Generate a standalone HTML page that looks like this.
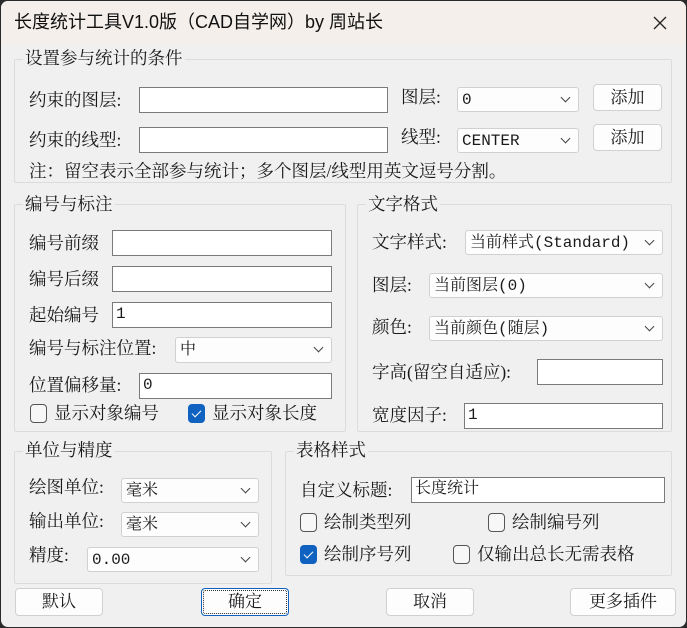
<!DOCTYPE html>
<html><head><meta charset="utf-8"><style>
*{box-sizing:border-box;margin:0;padding:0}
body{width:687px;height:628px;background:#2a2a2a;position:relative;overflow:hidden;font-family:"Liberation Serif","Noto Serif CJK SC",serif;font-size:17.5px;color:#1a1a1a}
#win{position:absolute;left:1px;top:1px;width:685px;height:626px;background:#f0f0f0;border-radius:7px;overflow:hidden}
#tb{position:absolute;left:0;top:0;width:685px;height:44px;background:#f4efeb;font-family:"Liberation Sans","Noto Sans CJK SC",sans-serif;font-size:18px;color:#111}
.a{position:absolute;white-space:nowrap;line-height:20px}
.g{position:absolute;border:1px solid #dcdcdc;border-radius:2px}
.lg{position:absolute;background:#f0f0f0;padding:0 2px;line-height:20px;white-space:nowrap}
.in{position:absolute;background:#fff;border:1px solid #7a7a7a;padding-left:3px;line-height:23px;font-size:16px;font-family:"Liberation Mono","Noto Serif CJK SC",serif}
.sel{position:absolute;background:#fdfdfd;border:1px solid #d0d0d0;border-radius:3px;padding-left:4px;font-size:16px;line-height:24px;white-space:nowrap;font-family:"Liberation Mono","Noto Serif CJK SC",serif}
.sel:after{content:"";position:absolute;right:9px;top:6px;width:6px;height:6px;border-right:1px solid #444;border-bottom:1px solid #444;transform:rotate(45deg)}
.btn{position:absolute;background:#fdfdfd;border:1px solid #d0d0d0;border-radius:4px;text-align:center;font-size:17px;line-height:25px}
.cb{position:absolute;width:17px;height:19px;border:1px solid #555;border-radius:4px;background:#f7f7f7}
.cb.on{background:#0f62c0;border-color:#0f62c0}
.cb.on:after{content:"";position:absolute;left:5px;top:3px;width:4px;height:8px;border-right:1.5px solid #fff;border-bottom:1.5px solid #fff;transform:rotate(45deg)}
</style></head><body><div id="win">
<div id="tb"><div class="a" style="left:13px;top:11px">长度统计工具V1.0版（CAD自学网）by 周站长</div>
<svg style="position:absolute;left:651px;top:14px" width="16" height="16"><path d="M2 2L14 14M14 2L2 14" stroke="#222" stroke-width="1.3"/></svg></div>

<div class="g" style="left:13px;top:58px;width:658px;height:124px"></div>
<div class="lg" style="left:22px;top:47px">设置参与统计的条件</div>
<div class="a" style="left:28px;top:89px">约束的图层:</div>
<div class="in" style="left:138px;top:86px;width:249px;height:26px"></div>
<div class="a" style="left:400px;top:86px">图层:</div>
<div class="sel" style="left:456px;top:86px;width:122px;height:25px">0</div>
<div class="btn" style="left:592px;top:83px;width:69px;height:27px">添加</div>
<div class="a" style="left:28px;top:129px">约束的线型:</div>
<div class="in" style="left:138px;top:126px;width:249px;height:26px"></div>
<div class="a" style="left:400px;top:126px">线型:</div>
<div class="sel" style="left:456px;top:127px;width:122px;height:25px">CENTER</div>
<div class="btn" style="left:592px;top:123px;width:69px;height:27px">添加</div>
<div class="a" style="left:28px;top:160px">注：留空表示全部参与统计；多个图层/线型用英文逗号分割。</div>

<div class="g" style="left:13px;top:203px;width:332px;height:228px"></div>
<div class="lg" style="left:22px;top:193px">编号与标注</div>
<div class="a" style="left:28px;top:232px">编号前缀</div>
<div class="in" style="left:111px;top:229px;width:220px;height:26px"></div>
<div class="a" style="left:28px;top:268px">编号后缀</div>
<div class="in" style="left:111px;top:265px;width:220px;height:26px"></div>
<div class="a" style="left:28px;top:304px">起始编号</div>
<div class="in" style="left:111px;top:301px;width:220px;height:26px">1</div>
<div class="a" style="left:28px;top:337px">编号与标注位置:</div>
<div class="sel" style="left:174px;top:336px;width:157px;height:26px">中</div>
<div class="a" style="left:28px;top:374px">位置偏移量:</div>
<div class="in" style="left:138px;top:372px;width:193px;height:26px">0</div>
<div class="cb" style="left:29px;top:403px"></div><div class="a" style="left:53px;top:402px">显示对象编号</div>
<div class="cb on" style="left:187px;top:403px"></div><div class="a" style="left:211px;top:402px">显示对象长度</div>

<div class="g" style="left:356px;top:203px;width:315px;height:228px"></div>
<div class="lg" style="left:365px;top:193px">文字格式</div>
<div class="a" style="left:371px;top:231px">文字样式:</div>
<div class="sel" style="left:464px;top:229px;width:198px;height:25px">当前样式(Standard)</div>
<div class="a" style="left:371px;top:274px">图层:</div>
<div class="sel" style="left:428px;top:272px;width:234px;height:25px">当前图层(0)</div>
<div class="a" style="left:371px;top:316px">颜色:</div>
<div class="sel" style="left:428px;top:315px;width:234px;height:25px">当前颜色(随层)</div>
<div class="a" style="left:371px;top:361px">字高(留空自适应):</div>
<div class="in" style="left:536px;top:358px;width:126px;height:26px"></div>
<div class="a" style="left:371px;top:404px">宽度因子:</div>
<div class="in" style="left:463px;top:402px;width:199px;height:26px">1</div>

<div class="g" style="left:13px;top:450px;width:258px;height:133px"></div>
<div class="lg" style="left:22px;top:439px">单位与精度</div>
<div class="a" style="left:28px;top:476px">绘图单位:</div>
<div class="sel" style="left:120px;top:477px;width:138px;height:25px">毫米</div>
<div class="a" style="left:28px;top:510px">输出单位:</div>
<div class="sel" style="left:120px;top:511px;width:138px;height:25px">毫米</div>
<div class="a" style="left:28px;top:544px">精度:</div>
<div class="sel" style="left:86px;top:546px;width:172px;height:25px">0.00</div>

<div class="g" style="left:284px;top:450px;width:387px;height:125px"></div>
<div class="lg" style="left:293px;top:439px">表格样式</div>
<div class="a" style="left:299px;top:479px">自定义标题:</div>
<div class="in" style="left:410px;top:476px;width:254px;height:26px">长度统计</div>
<div class="cb" style="left:299px;top:512px"></div><div class="a" style="left:323px;top:511px">绘制类型列</div>
<div class="cb" style="left:487px;top:512px"></div><div class="a" style="left:511px;top:511px">绘制编号列</div>
<div class="cb on" style="left:299px;top:544px"></div><div class="a" style="left:323px;top:543px">绘制序号列</div>
<div class="cb" style="left:452px;top:544px"></div><div class="a" style="left:476px;top:543px">仅输出总长无需表格</div>

<div class="btn" style="left:14px;top:587px;width:88px;height:28px">默认</div>
<div class="btn" style="left:200px;top:587px;width:88px;height:28px;border:1px solid #0f62c0;outline:1px dotted #333;outline-offset:-3px">确定</div>
<div class="btn" style="left:385px;top:587px;width:88px;height:28px">取消</div>
<div class="btn" style="left:569px;top:587px;width:106px;height:28px">更多插件</div>
</div></body></html>
